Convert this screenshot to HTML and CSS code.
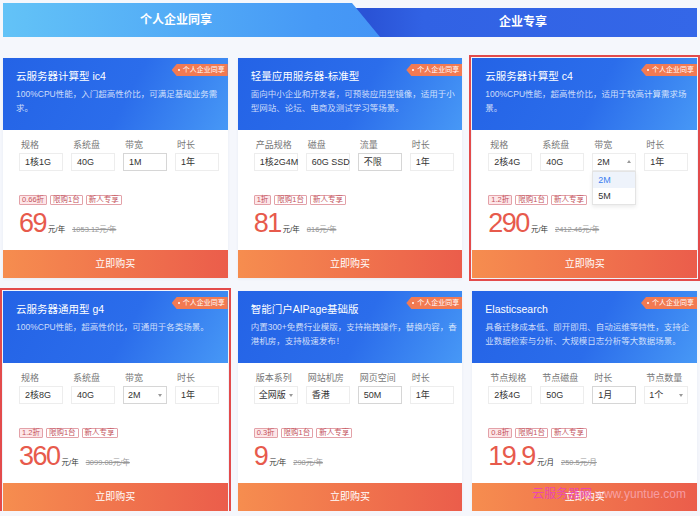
FILE: index.html
```html
<!DOCTYPE html>
<html lang="zh-CN">
<head>
    <meta charset="UTF-8">
    <meta name="viewport" content="width=device-width, initial-scale=1.0">
    <title>云产品特惠</title>
    <link rel="stylesheet" href="styles.css">
</head>
<body>
<div class="page">
    <!-- Tabs -->
    <div class="tabs">
        <div class="tab tab-personal">个人企业同享</div>
        <div class="tab tab-enterprise">企业专享</div>
    </div>

    <!-- Product cards -->
    <div class="cards">
        <div class="card">
            <div class="card-head">
                <div class="badge">个人企业同享</div>
                <div class="card-title">云服务器计算型 ic4</div>
                <div class="card-desc">100%CPU性能，入门超高性价比，可满足基础业务需求。</div>
            </div>
            <div class="card-body">
                <div class="specs">
                    <div class="spec"><label>规格</label><div class="field">1核1G</div></div>
                    <div class="spec"><label>系统盘</label><div class="field">40G</div></div>
                    <div class="spec"><label>带宽</label><div class="field edit">1M</div></div>
                    <div class="spec"><label>时长</label><div class="field">1年</div></div>
                </div>
                <div class="tags"><span class="tag off">0.66折</span><span class="tag">限购1台</span><span class="tag">新人专享</span></div>
                <div class="price"><span class="amount">69</span><span class="unit">元/年</span><span class="was">1053.12元/年</span></div>
            </div>
            <div class="buy">立即购买</div>
        </div>

        <div class="card">
            <div class="card-head">
                <div class="badge">个人企业同享</div>
                <div class="card-title">轻量应用服务器-标准型</div>
                <div class="card-desc">面向中小企业和开发者，可预装应用型镜像，适用于小型网站、论坛、电商及测试学习等场景。</div>
            </div>
            <div class="card-body">
                <div class="specs">
                    <div class="spec"><label>产品规格</label><div class="field">1核2G4M</div></div>
                    <div class="spec"><label>磁盘</label><div class="field">60G SSD</div></div>
                    <div class="spec"><label>流量</label><div class="field edit">不限</div></div>
                    <div class="spec"><label>时长</label><div class="field">1年</div></div>
                </div>
                <div class="tags"><span class="tag off">1折</span><span class="tag">限购1台</span><span class="tag">新人专享</span></div>
                <div class="price"><span class="amount">81</span><span class="unit">元/年</span><span class="was">816元/年</span></div>
            </div>
            <div class="buy">立即购买</div>
        </div>

        <div class="card picked">
            <div class="card-head">
                <div class="badge">个人企业同享</div>
                <div class="card-title">云服务器计算型 c4</div>
                <div class="card-desc">100%CPU性能，超高性价比，适用于较高计算需求场景。</div>
            </div>
            <div class="card-body">
                <div class="specs">
                    <div class="spec"><label>规格</label><div class="field">2核4G</div></div>
                    <div class="spec"><label>系统盘</label><div class="field">40G</div></div>
                    <div class="spec"><label>带宽</label>
                        <div class="field select open">2M
                            <div class="options">
                                <div class="on">2M</div>
                                <div>5M</div>
                            </div>
                        </div>
                    </div>
                    <div class="spec"><label>时长</label><div class="field">1年</div></div>
                </div>
                <div class="tags"><span class="tag off">1.2折</span><span class="tag">限购1台</span><span class="tag">新人专享</span></div>
                <div class="price"><span class="amount">290</span><span class="unit">元/年</span><span class="was">2412.46元/年</span></div>
            </div>
            <div class="buy">立即购买</div>
        </div>

        <div class="card picked">
            <div class="card-head">
                <div class="badge">个人企业同享</div>
                <div class="card-title">云服务器通用型 g4</div>
                <div class="card-desc">100%CPU性能，超高性价比，可通用于各类场景。</div>
            </div>
            <div class="card-body">
                <div class="specs">
                    <div class="spec"><label>规格</label><div class="field">2核8G</div></div>
                    <div class="spec"><label>系统盘</label><div class="field">40G</div></div>
                    <div class="spec"><label>带宽</label><div class="field edit select">2M</div></div>
                    <div class="spec"><label>时长</label><div class="field">1年</div></div>
                </div>
                <div class="tags"><span class="tag off">1.2折</span><span class="tag">限购1台</span><span class="tag">新人专享</span></div>
                <div class="price"><span class="amount">360</span><span class="unit">元/年</span><span class="was">3099.08元/年</span></div>
            </div>
            <div class="buy">立即购买</div>
        </div>

        <div class="card">
            <div class="card-head">
                <div class="badge">个人企业同享</div>
                <div class="card-title">智能门户AIPage基础版</div>
                <div class="card-desc">内置300+免费行业模版，支持拖拽操作，替换内容，香港机房，支持极速发布！</div>
            </div>
            <div class="card-body">
                <div class="specs">
                    <div class="spec"><label>版本系列</label><div class="field select">全网版</div></div>
                    <div class="spec"><label>网站机房</label><div class="field">香港</div></div>
                    <div class="spec"><label>网页空间</label><div class="field edit">50M</div></div>
                    <div class="spec"><label>时长</label><div class="field">1年</div></div>
                </div>
                <div class="tags"><span class="tag off">0.3折</span><span class="tag">限购1台</span><span class="tag">新人专享</span></div>
                <div class="price"><span class="amount">9</span><span class="unit">元/年</span><span class="was">298元/年</span></div>
            </div>
            <div class="buy">立即购买</div>
        </div>

        <div class="card">
            <div class="card-head">
                <div class="badge">个人企业同享</div>
                <div class="card-title">Elasticsearch</div>
                <div class="card-desc">具备迁移成本低、即开即用、自动运维等特性，支持企业数据检索与分析、大规模日志分析等大数据场景。</div>
            </div>
            <div class="card-body">
                <div class="specs">
                    <div class="spec"><label>节点规格</label><div class="field">2核4G</div></div>
                    <div class="spec"><label>节点磁盘</label><div class="field">50G</div></div>
                    <div class="spec"><label>时长</label><div class="field edit">1月</div></div>
                    <div class="spec"><label>节点数量</label><div class="field select">1个</div></div>
                </div>
                <div class="tags"><span class="tag off">0.8折</span><span class="tag">限购1台</span><span class="tag">新人专享</span></div>
                <div class="price"><span class="amount">19.9</span><span class="unit">元/月</span><span class="was">250.5元/月</span></div>
            </div>
            <div class="buy">立即购买</div>
            <div class="mark"><span class="mark-name">云服务器网</span> www.yuntue.com</div>
        </div>
    </div>
</div>
</body>
</html>
```

FILE: styles.css
```css
* {
    box-sizing: border-box;
}

body {
    margin: 0;
    background: #f5f7fc;
    font-family: "Liberation Sans", "Noto Sans CJK SC", sans-serif;
    color: #333;
}

.page {
    padding: 3px 3px 0;
}

/* tabs */
.tabs {
    display: grid;
    height: 34px;
}

.tab {
    grid-area: 1 / 1;
    color: #fff;
    font-size: 12px;
    font-weight: bold;
    text-align: center;
}

.tab-personal {
    z-index: 1;
    line-height: 34px;
    padding-right: 348px;
    background: linear-gradient(90deg, #63c3f7 0%, #4699f6 45%, #3a80f3 100%);
    clip-path: polygon(0 0, 349px 0, 377px 100%, 0 100%);
}

.tab-enterprise {
    margin-top: 5px;
    line-height: 29px;
    padding-left: 346px;
    background: linear-gradient(90deg, #2a53d6 0, #2a53d6 365px, #3162e4 420px, #3467e8 100%);
}

/* cards */
.cards {
    display: grid;
    grid-template-columns: repeat(3, 1fr);
    column-gap: 10px;
    row-gap: 13px;
    margin-top: 21px;
}

.card {
    position: relative;
    height: 220px;
    display: flex;
    flex-direction: column;
    background: #fff;
    box-shadow: 0 1px 3px rgba(40, 60, 120, 0.06);
}

.card.picked {
    outline: 2px solid #e34b4b;
    outline-offset: 1px;
}

.card-head {
    position: relative;
    height: 72px;
    padding: 11px 0 0 13px;
    background: linear-gradient(118deg, #2463e6 0%, #2b6deb 55%, #4798f6 100%);
    color: #fff;
}

.card-title {
    font-size: 10.5px;
    line-height: 14px;
}

.card-desc {
    width: 209px;
    margin-top: 4px;
    font-size: 8.5px;
    line-height: 14px;
    color: rgba(255, 255, 255, 0.78);
}

.badge {
    position: absolute;
    top: 6px;
    right: 0;
    height: 12px;
    padding: 0 3px 0 11px;
    background: #f27a52;
    font-size: 7px;
    line-height: 12px;
    color: #fff;
    clip-path: polygon(5px 0, 100% 0, 100% 100%, 5px 100%, 0 50%);
}

.badge::before {
    content: "";
    position: absolute;
    left: 6px;
    top: 5px;
    width: 2px;
    height: 2px;
    border-radius: 50%;
    background: #fff;
}

.card-body {
    flex: 1;
    padding: 9px 0 0 16px;
}

.specs {
    display: grid;
    grid-template-columns: repeat(4, 44px);
    column-gap: 8px;
}

.spec label {
    display: block;
    padding-left: 2px;
    font-size: 9px;
    line-height: 12px;
    color: #777;
    white-space: nowrap;
}

.field {
    position: relative;
    height: 18px;
    margin-top: 2px;
    padding: 0 5px;
    border: 1px solid #ededed;
    font-size: 9px;
    line-height: 16px;
    white-space: nowrap;
}

.field.edit {
    border-color: #d6d6d6;
}

.field.select {
    padding-left: 4px;
}

.field.select::after {
    content: "";
    position: absolute;
    right: 4px;
    top: 7px;
    border-left: 2.5px solid transparent;
    border-right: 2.5px solid transparent;
    border-top: 3px solid #999;
}

.field.open::after {
    top: 6px;
    border-top: 0;
    border-bottom: 3px solid #999;
}

.options {
    position: absolute;
    z-index: 2;
    left: -1px;
    right: -1px;
    top: 17px;
    background: #fff;
    border: 1px solid #e4e4e4;
    box-shadow: 0 2px 4px rgba(0, 0, 0, 0.08);
}

.options div {
    height: 16px;
    line-height: 16px;
    padding-left: 5px;
}

.options .on {
    background: #eef3fb;
    color: #3b7ff0;
}

.tags {
    display: flex;
    gap: 3px;
    margin-top: 24px;
}

.tag {
    height: 10px;
    padding: 0 2px;
    border: 1px solid #e3a1a8;
    border-radius: 1px;
    font-size: 7.5px;
    line-height: 8px;
    color: #c4545d;
}

.tag.off {
    background: #fde6e8;
}

.price {
    display: flex;
    align-items: baseline;
    height: 28px;
    margin-top: 4px;
}

.amount {
    font-size: 27px;
    line-height: 28px;
    letter-spacing: -1.5px;
    color: #e75a4c;
}

.unit {
    margin-left: 2px;
    font-size: 7.5px;
    color: #333;
}

.was {
    margin-left: 7px;
    font-size: 7.5px;
    color: #999;
    text-decoration: line-through;
}

.buy {
    height: 28px;
    background: linear-gradient(90deg, #f68d4f, #eb5d4b);
    color: #fff;
    font-size: 10px;
    line-height: 28px;
    text-align: center;
}

/* site watermark over the last button */
.mark {
    position: absolute;
    right: 11px;
    bottom: 10px;
    font-size: 12px;
    line-height: 14px;
    white-space: nowrap;
    color: rgba(255, 205, 235, 0.55);
}

.mark-name {
    color: rgba(232, 56, 205, 0.8);
}
```
